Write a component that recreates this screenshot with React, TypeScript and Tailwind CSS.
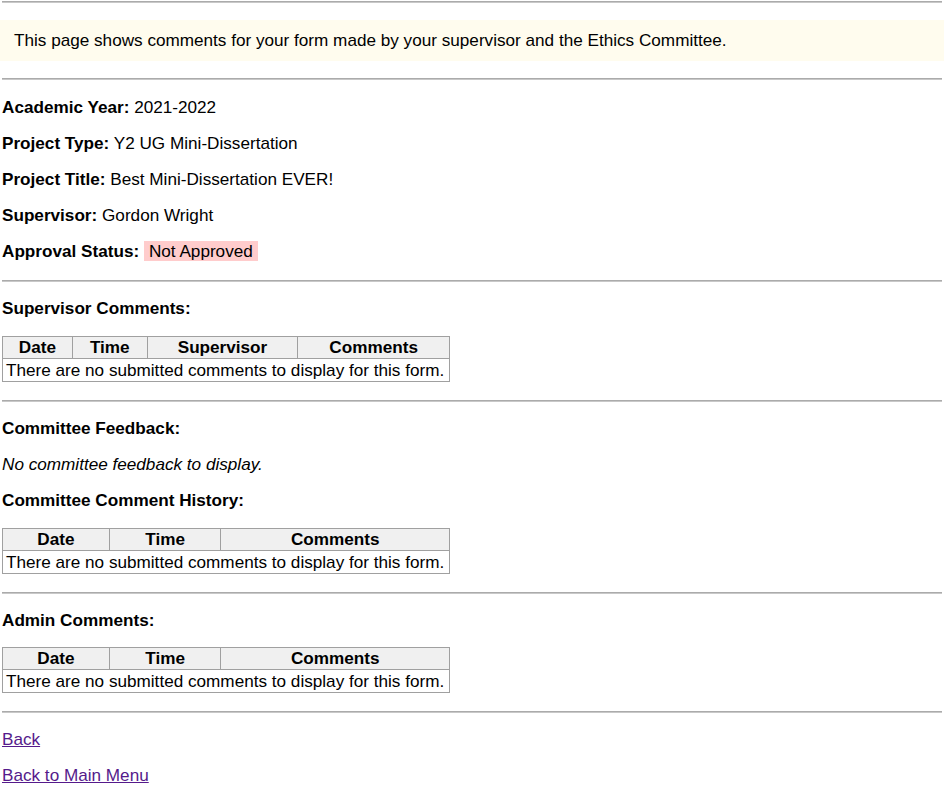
import React from "react";

const Hr = () => <div className="h-[2px] bg-[#ababab] mx-[2px] border-b border-[#c8c8c8]" />;

function Table({ cols, widths }: { cols: string[]; widths: number[] }) {
  return (
    <table className="border-collapse border border-[#a0a0a0] ml-[2px] w-[448px]">
      <thead>
        <tr className="bg-[#f0f0f0]">
          {cols.map((c, i) => (
            <th
              key={c}
              style={{ width: widths[i] }}
              className="border border-[#a0a0a0] font-bold text-center h-[22px] leading-[19px] p-0"
            >
              {c}
            </th>
          ))}
        </tr>
      </thead>
      <tbody>
        <tr>
          <td colSpan={cols.length} className="border border-[#a0a0a0] h-[23px] leading-[19px] px-[3px] py-0 whitespace-nowrap">
            There are no submitted comments to display for this form.
          </td>
        </tr>
      </tbody>
    </table>
  );
}

export default function App() {
  return (
    <div
      className="bg-white text-black text-[17.15px] leading-[19px] min-h-[788px] pt-[1px]"
      style={{ fontFamily: '"Liberation Sans", Arial, sans-serif' }}
    >
      <Hr />
      <div className="mt-[17px] h-[41px] bg-[#fffcee] flex items-center pl-[14px]">
        This page shows comments for your form made by your supervisor and the Ethics Committee.
      </div>
      <div className="mt-[17px]">
        <Hr />
      </div>
      <div className="px-[2px] pt-[18px] flex flex-col gap-[17px]">
        <p>
          <b>Academic Year:</b> 2021-2022
        </p>
        <p>
          <b>Project Type:</b> Y2 UG Mini-Dissertation
        </p>
        <p>
          <b>Project Title:</b> Best Mini-Dissertation EVER!
        </p>
        <p>
          <b>Supervisor:</b> Gordon Wright
        </p>
        <p>
          <b>Approval Status:</b> <span className="bg-[#ffcccc] px-[5px]">Not Approved</span>
        </p>
      </div>
      <div className="mt-[19px]">
        <Hr />
      </div>
      <p className="px-[2px] mt-[17px] font-bold">Supervisor Comments:</p>
      <div className="mt-[18px]">
        <Table cols={["Date", "Time", "Supervisor", "Comments"]} widths={[70, 75, 151, 152]} />
      </div>
      <div className="mt-[18px]">
        <Hr />
      </div>
      <p className="px-[2px] mt-[17px] font-bold">Committee Feedback:</p>
      <p className="px-[2px] mt-[17px] italic">No committee feedback to display.</p>
      <p className="px-[2px] mt-[17px] font-bold">Committee Comment History:</p>
      <div className="mt-[18px]">
        <Table cols={["Date", "Time", "Comments"]} widths={[107, 112, 229]} />
      </div>
      <div className="mt-[18px]">
        <Hr />
      </div>
      <p className="px-[2px] mt-[17px] font-bold">Admin Comments:</p>
      <div className="mt-[17px]">
        <Table cols={["Date", "Time", "Comments"]} widths={[107, 112, 229]} />
      </div>
      <div className="mt-[18px]">
        <Hr />
      </div>
      <div className="px-[2px] mt-[17px] flex flex-col gap-[17px] items-start">
        <a href="#" className="text-[#551a8b] underline">
          Back
        </a>
        <a href="#" className="text-[#551a8b] underline">
          Back to Main Menu
        </a>
      </div>
    </div>
  );
}
